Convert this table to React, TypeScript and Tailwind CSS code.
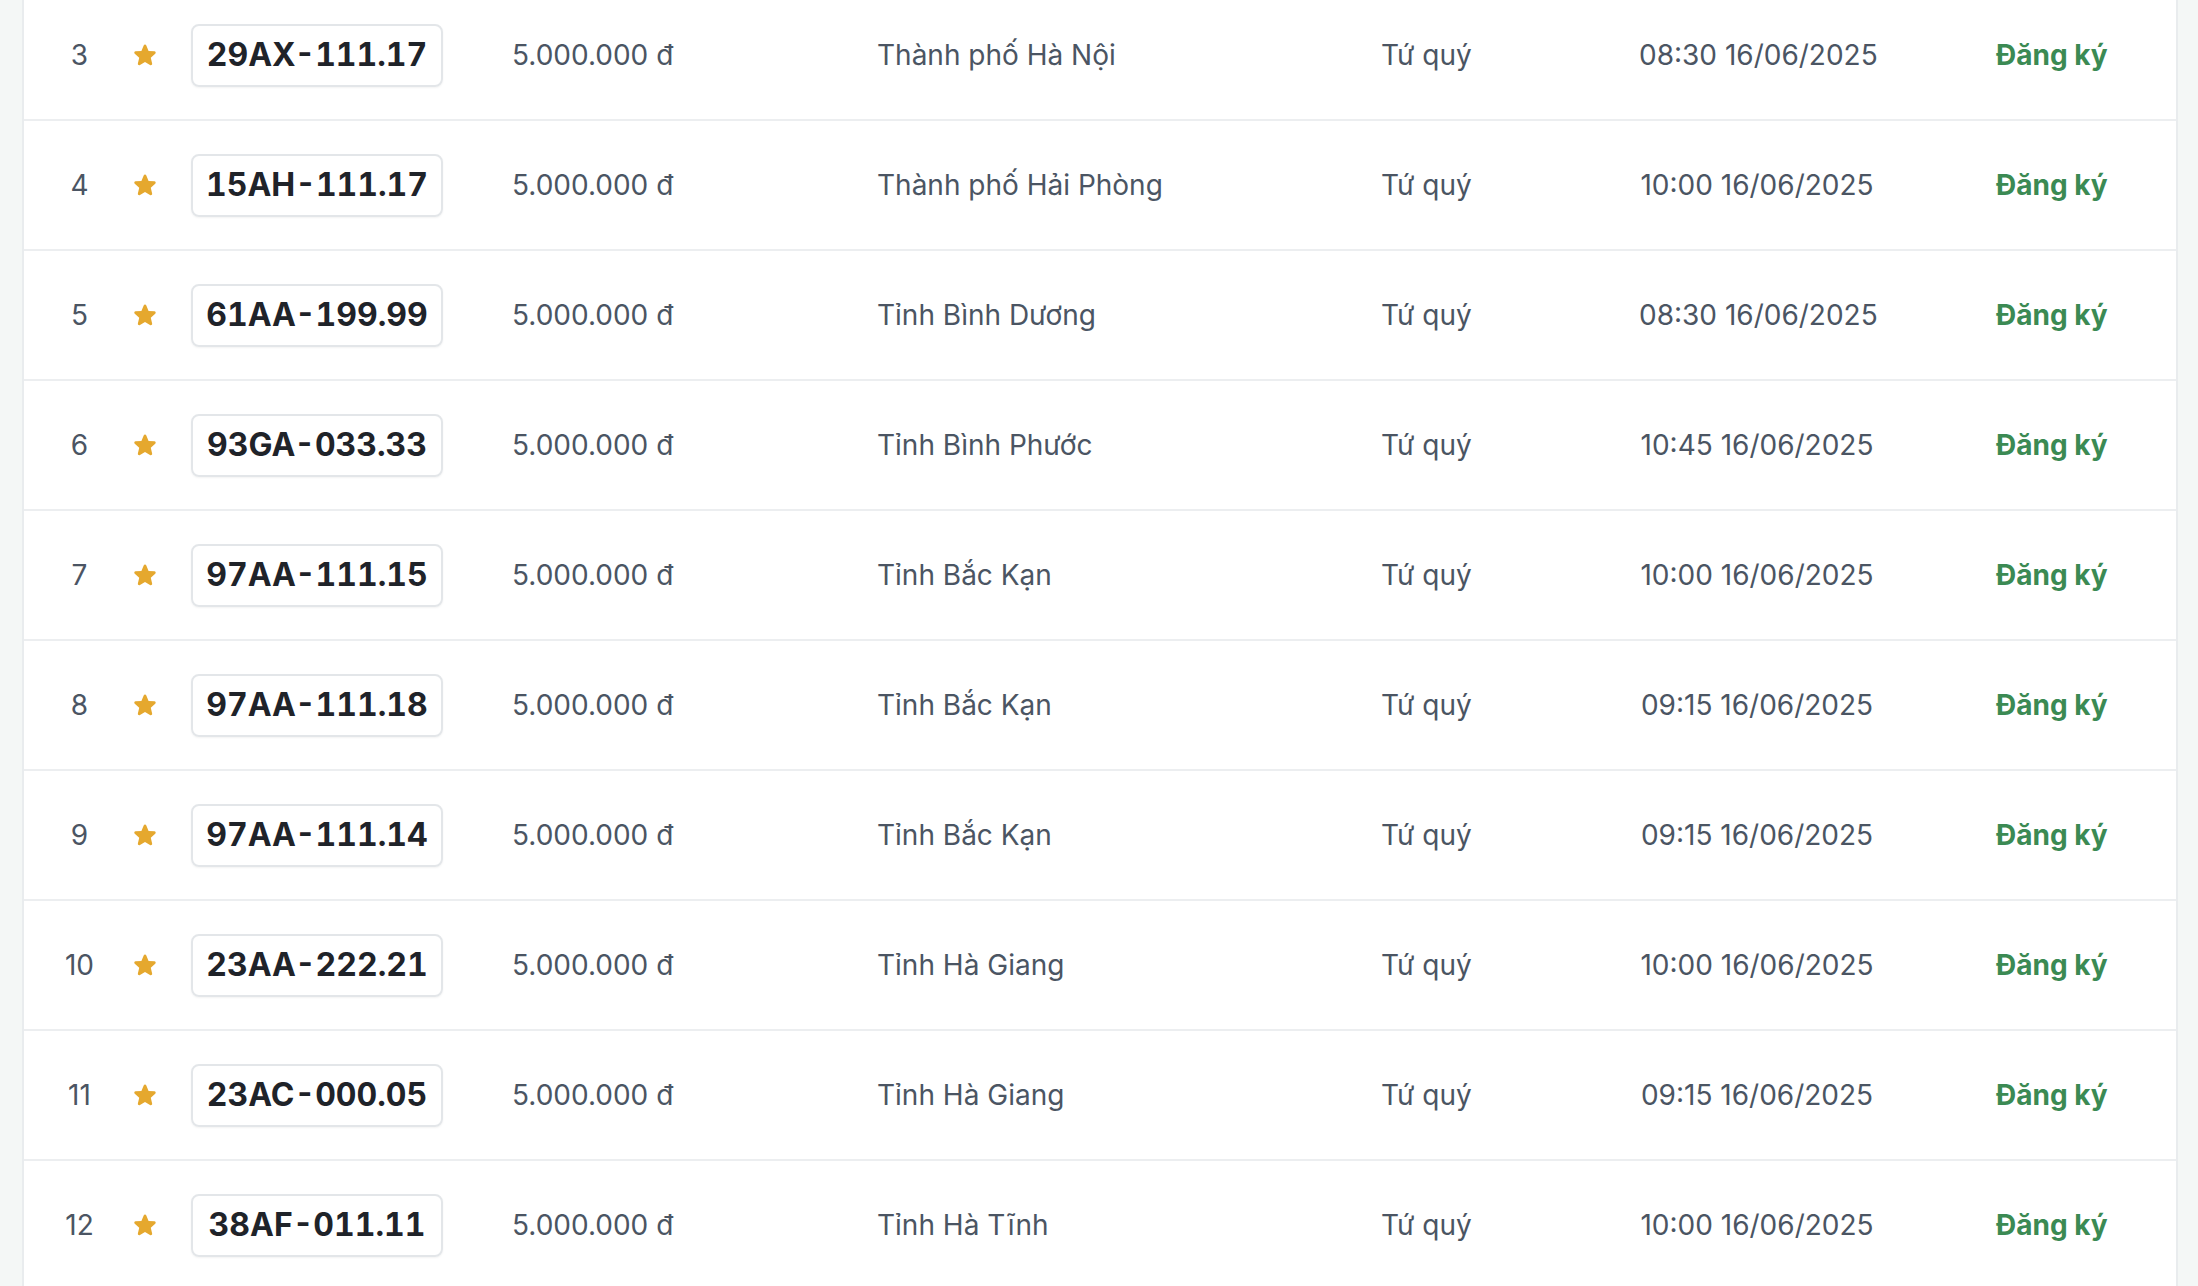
import React from "react";

type Row = { n: number; plate: string; loc: string; time: string };

const rows: Row[] = [
  { n: 3, plate: "29AX-111.17", loc: "Thành phố Hà Nội", time: "08:30 16/06/2025" },
  { n: 4, plate: "15AH-111.17", loc: "Thành phố Hải Phòng", time: "10:00 16/06/2025" },
  { n: 5, plate: "61AA-199.99", loc: "Tỉnh Bình Dương", time: "08:30 16/06/2025" },
  { n: 6, plate: "93GA-033.33", loc: "Tỉnh Bình Phước", time: "10:45 16/06/2025" },
  { n: 7, plate: "97AA-111.15", loc: "Tỉnh Bắc Kạn", time: "10:00 16/06/2025" },
  { n: 8, plate: "97AA-111.18", loc: "Tỉnh Bắc Kạn", time: "09:15 16/06/2025" },
  { n: 9, plate: "97AA-111.14", loc: "Tỉnh Bắc Kạn", time: "09:15 16/06/2025" },
  { n: 10, plate: "23AA-222.21", loc: "Tỉnh Hà Giang", time: "10:00 16/06/2025" },
  { n: 11, plate: "23AC-000.05", loc: "Tỉnh Hà Giang", time: "09:15 16/06/2025" },
  { n: 12, plate: "38AF-011.11", loc: "Tỉnh Hà Tĩnh", time: "10:00 16/06/2025" },
];

function Star() {
  return (
    <svg viewBox="0 0 24 24" className="w-[26px] h-[26px] shrink-0" fill="#e5a82e">
      <path d="M10.788 3.21c.448-1.077 1.976-1.077 2.424 0l2.082 5.006 5.404.434c1.164.093 1.636 1.545.749 2.305l-4.117 3.527 1.257 5.273c.271 1.136-.964 2.033-1.96 1.425L12 18.354 7.373 21.18c-.996.608-2.231-.29-1.96-1.425l1.257-5.273-4.117-3.527c-.887-.76-.415-2.212.749-2.305l5.404-.434 2.082-5.005Z" />
    </svg>
  );
}

export default function App() {
  return (
    <div className="w-full h-[1286px] overflow-hidden bg-[#f4f7f6] pl-[22px] pr-[20px] font-['Inter','Noto_Sans',sans-serif]">
      <div className="bg-white border-x-2 border-[#e9ecee] -mt-[9px]">
        {rows.map((r) => (
          <div
            key={r.n}
            className="h-[130px] flex items-center border-b-2 border-[#eceef0] text-[28px] text-[#4b5563] whitespace-nowrap"
          >
            <div className="w-[111px] text-center">{r.n}</div>
            <div className="w-[20px] flex items-center justify-center">
              <Star />
            </div>
            <div className="ml-[36px] w-[252px] h-[63px] flex items-center justify-center rounded-[8px] border-2 border-[#e3e6e9] shadow-[0_1px_2px_rgba(0,0,0,0.05)] text-[32px] font-bold tabular-nums tracking-normal text-[#1f2329]">
              {r.plate}
            </div>
            <div className="ml-[69px] w-[365px]">5.000.000 đ</div>
            <div className="w-[504px]">{r.loc}</div>
            <div className="w-[258px]">Tứ quý</div>
            <div className="w-[236px] text-center">{r.time}</div>
            <div className="ml-[121px] font-bold text-[#3b8a53]">Đăng ký</div>
          </div>
        ))}
      </div>
    </div>
  );
}
